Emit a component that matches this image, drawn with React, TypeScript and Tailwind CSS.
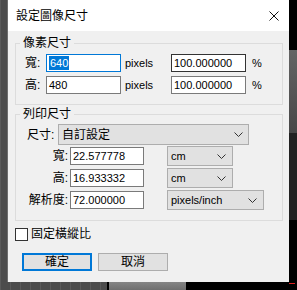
import React from 'react';

const font = 'font-["Liberation_Sans","Noto_Sans_CJK_TC",sans-serif]';

function Chevron() {
  return (
    <svg width="9" height="5" viewBox="0 0 9 5" className="shrink-0">
      <path d="M0.5 0.5 L4.5 4.5 L8.5 0.5" fill="none" stroke="#333" strokeWidth="1" />
    </svg>
  );
}

interface IBox {
  value: string;
  width: string;
  dark?: boolean;
}

const TextBox = ({ value, width, dark }: IBox) => (
  <div
    className={`${width} h-[18px] bg-white border ${dark ? 'border-[#333]' : 'border-[#7a7a7a]'} flex items-center pl-[2px] text-[11px] leading-[14px] text-black`}
  >
    {value}
  </div>
);

interface ISelect {
  value: string;
  width: string;
  height: string;
  chevronPad: string;
  big?: boolean;
}

const Select = ({ value, width, height, chevronPad, big }: ISelect) => (
  <div
    className={`${width} ${height} bg-[#e1e1e1] border border-[#adadad] flex items-center justify-between pl-[3px] ${chevronPad} ${big ? 'text-[12px]' : 'text-[11px]'} leading-[14px] text-black`}
  >
    <span>{value}</span>
    <Chevron />
  </div>
);

const Legend = ({ text }: { text: string }) => (
  <legend className="ml-[4px] px-[3px] text-[12px] leading-[14px] text-black">{text}</legend>
);

export default function App() {
  return (
    <div className={`w-[297px] h-[290px] bg-black flex flex-col overflow-hidden ${font}`}>
      <div className="flex h-[282px]">
        {/* canvas grid on the left */}
        <div className="w-[7px] h-full bg-[#4c4c4c] bg-[linear-gradient(90deg,#5a5a5a_1px,transparent_1px)] bg-[length:10px_10px]" />

        {/* dialog */}
        <div className="w-[282px] h-full flex flex-col bg-[#f0f0f0] border-l border-[#6e6e6e]">
          <div className="h-[31px] bg-white flex items-center justify-between pl-[8px] pr-[10px]">
            <span className="text-[12px] leading-[14px] text-black">設定圖像尺寸</span>
            <svg width="10" height="10" viewBox="0 0 10 10">
              <path d="M0.5 0.5 L9.5 9.5 M9.5 0.5 L0.5 9.5" stroke="#111" strokeWidth="1" />
            </svg>
          </div>

          <fieldset className="mt-[5px] ml-[7px] w-[268px] border border-[#dcdcdc] pt-[4px] pb-[10px] flex flex-col gap-[4px]">
            <Legend text="像素尺寸" />
            <div className="flex items-center h-[18px]">
              <span className="w-[30px] pl-[9px] text-[12px] leading-[14px] text-black">寬:</span>
              <div className="w-[75px] h-[18px] bg-white border border-[#0078d7] flex items-center pl-[2px] text-[11px] leading-[14px]">
                <span className="bg-[#0078d7] text-white px-[1px]">640</span>
              </div>
              <span className="w-[50px] pl-[4px] text-[11px] leading-[14px] text-black">pixels</span>
              <TextBox value="100.000000" width="w-[75px]" dark />
              <span className="pl-[6px] text-[11px] leading-[14px] text-black">%</span>
            </div>
            <div className="flex items-center h-[18px]">
              <span className="w-[30px] pl-[9px] text-[12px] leading-[14px] text-black">高:</span>
              <TextBox value="480" width="w-[75px]" />
              <span className="w-[50px] pl-[4px] text-[11px] leading-[14px] text-black">pixels</span>
              <TextBox value="100.000000" width="w-[75px]" />
              <span className="pl-[6px] text-[11px] leading-[14px] text-black">%</span>
            </div>
          </fieldset>

          <fieldset className="mt-[2px] ml-[7px] w-[268px] border border-[#dcdcdc] pt-[3px] pb-[9px] flex flex-col">
            <Legend text="列印尺寸" />
            <div className="flex items-center h-[21px]">
              <span className="w-[42px] pl-[11px] text-[12px] leading-[14px] text-black">尺寸:</span>
              <Select value="自訂設定" width="w-[191px]" height="h-[21px]" chevronPad="pr-[5px]" big />
            </div>
            {[
              { label: '寬:', value: '22.577778', unit: 'cm', w: 'w-[66px]' },
              { label: '高:', value: '16.933332', unit: 'cm', w: 'w-[66px]' },
              { label: '解析度:', value: '72.000000', unit: 'pixels/inch', w: 'w-[97px]' },
            ].map((row) => (
              <div key={row.label} className="flex items-center h-[22px]">
                <span className="w-[54px] pr-[2px] text-right text-[12px] leading-[14px] text-black">{row.label}</span>
                <TextBox value={row.value} width="w-[74px]" />
                <div className="ml-[23px]">
                  <Select value={row.unit} width={row.w} height="h-[20px]" chevronPad="pr-[6px]" />
                </div>
              </div>
            ))}
          </fieldset>

          <div className="mt-[6px] ml-[7px] flex items-center gap-[3px] h-[14px]">
            <div className="w-[13px] h-[13px] bg-white border border-[#333]" />
            <span className="text-[12px] leading-[14px] text-black">固定橫縱比</span>
          </div>

          <div className="mt-[12px] ml-[14px] flex gap-[6px]">
            <button className="w-[70px] h-[18px] bg-[#e1e1e1] border-2 border-[#0078d7] text-[12px] leading-[14px] text-black flex items-center justify-center">
              確定
            </button>
            <button className="w-[70px] h-[18px] bg-[#e1e1e1] border border-[#adadad] text-[12px] leading-[14px] text-black flex items-center justify-center">
              取消
            </button>
          </div>
        </div>

        {/* right edge of the workspace */}
        <div className="w-[8px] h-full flex flex-col">
          <div className="h-[50px] bg-black" />
          <div className="h-[83px] bg-[linear-gradient(180deg,#646464,#474747)]" />
          <div className="h-[87px] bg-[#222]" />
          <div className="flex-1 bg-black" />
        </div>
      </div>

      <div className="flex h-[8px]">
        <div className="w-[107px] bg-[#4c4c4c] bg-[linear-gradient(90deg,#5a5a5a_1px,transparent_1px)] bg-[length:10px_10px]" />
        <div className="w-[2px] bg-black" />
        <div className="w-[77px] bg-[linear-gradient(180deg,#858585,#6f6f6f)]" />
        <div className="flex-1 bg-black flex items-start justify-end pr-[2px]">
          <div className="w-[6px] h-[1px] bg-[#d22] mt-[1px]" />
        </div>
      </div>
    </div>
  );
}
